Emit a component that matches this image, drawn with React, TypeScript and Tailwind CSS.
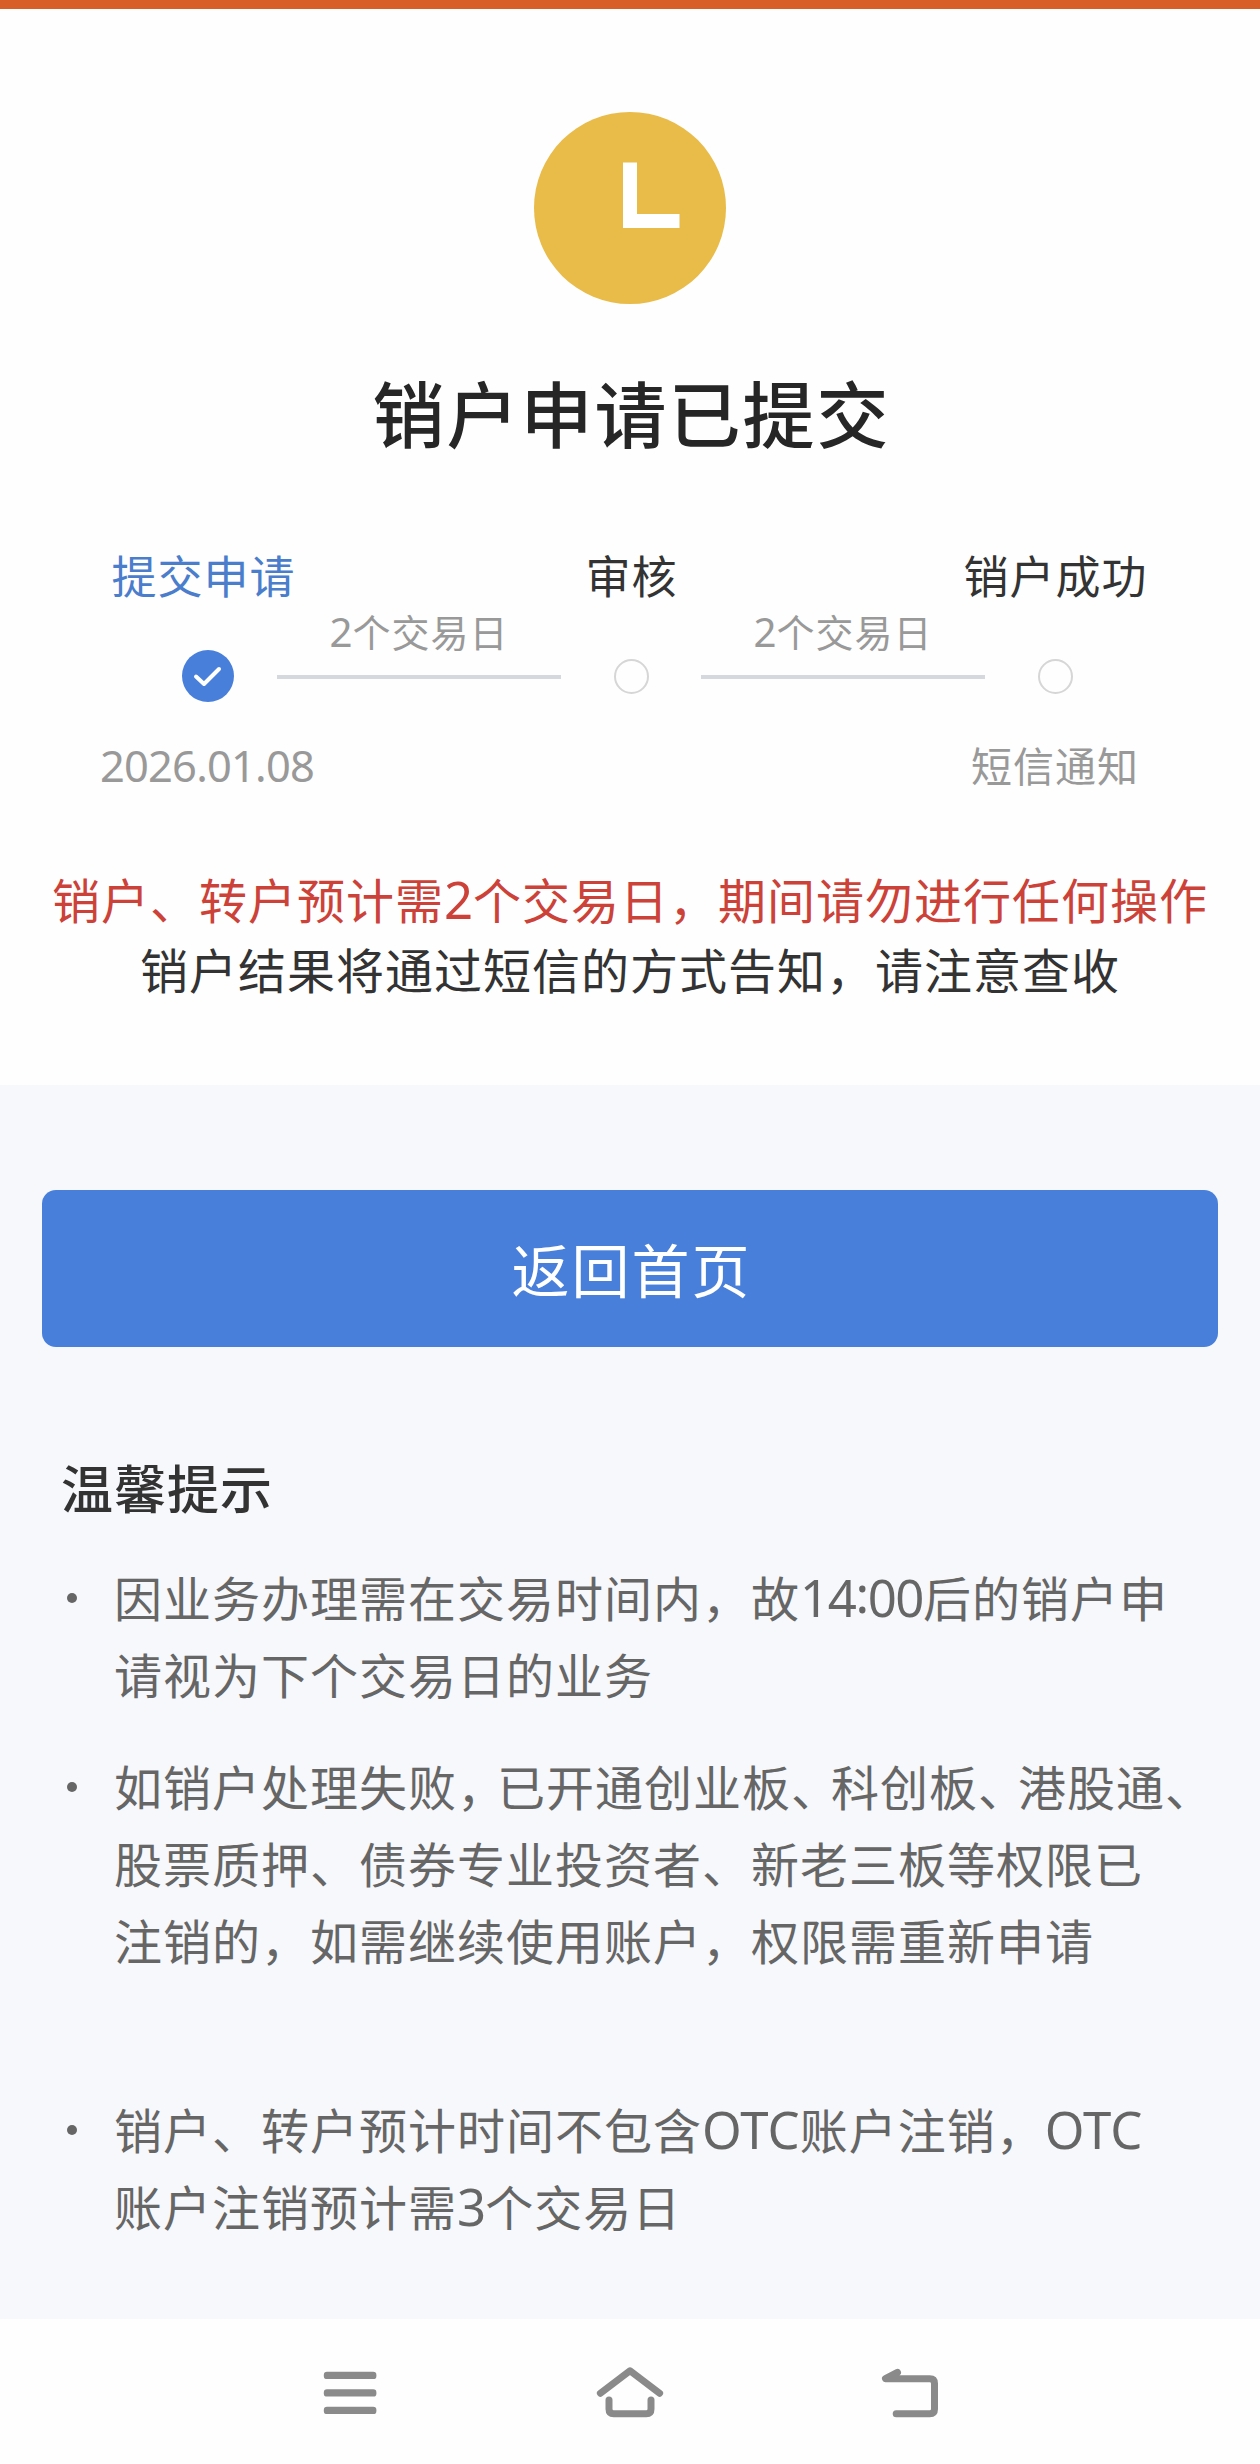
import React from 'react';

interface StepProps {
  label: string;
  note?: React.ReactNode;
  done?: boolean;
}

// Latin letters and digits sit inside the Chinese copy at a slightly larger size
const Latin: React.FC<{ children: React.ReactNode; className?: string }> = ({ children, className = 'tracking-normal' }) => (
  <span className={`font-['Noto_Sans',sans-serif] text-[1.06em] leading-none ${className}`}>{children}</span>
);

// Punctuation squeezed so the line still fits
const Tight: React.FC<{ children: React.ReactNode }> = ({ children }) => (
  <span className="tracking-[-8px]">{children}</span>
);

const Step: React.FC<StepProps> = ({ label, note, done = false }) => (
  <div className="flex w-[140px] flex-col items-center whitespace-nowrap">
    <div className={`h-[51px] text-[45px] leading-[51px] tracking-[1px] ${done ? '-ml-[7px] text-[#4a7dcb]' : 'ml-px text-[#333333]'}`}>
      {label}
    </div>
    <div className="mt-6 flex h-[104px] items-center justify-center">
      {done ? (
        <div className="ml-0.5 flex size-[52px] items-center justify-center rounded-full bg-[#487fdb]">
          <svg viewBox="0 0 52 52" fill="none" stroke="white" strokeWidth={4} className="size-full">
            <path strokeLinecap="round" strokeLinejoin="round" d="M14 26.5 22 34 37 19" />
          </svg>
        </div>
      ) : (
        <div className="size-[35px] rounded-full border-2 border-[#d6d6d6]" />
      )}
    </div>
    <div className="mt-[11px] h-[50px] text-[41px] leading-[50px] tracking-[1px] text-[#999999]">{note}</div>
  </div>
);

const Connector: React.FC = () => (
  <div className="flex w-[284px] flex-col items-center pt-[62px]">
    <div className="h-10 whitespace-nowrap text-[38px] leading-10 tracking-[1px] text-[#999999]">
      <Latin>2</Latin>个交易日
    </div>
    <div className="mt-6 h-1 w-full bg-[#d5d8dc]" />
  </div>
);

const Tip: React.FC<{ children: React.ReactNode; className?: string }> = ({ children, className = '' }) => (
  <li className={`flex ${className}`}>
    <span className="mt-[35px] size-2.5 shrink-0 rounded-full bg-[#666666]" />
    <p className="ml-[37px] whitespace-nowrap">{children}</p>
  </li>
);

const App: React.FC = () => {
  return (
    <div className="flex h-[2464px] w-[1260px] flex-col overflow-hidden bg-white font-['Noto_Sans_CJK_SC',sans-serif]" lang="zh-CN">
      <section className="h-[1085px] border-t-[9px] border-[#d85f27] bg-[#fefefe]">
        <div className="flex flex-col items-center pt-[103px]">
          <svg viewBox="0 0 192 192" className="size-48">
            <circle cx="96" cy="96" r="96" fill="#e9bb48" />
            <path d="M89 50.5h14v51.5h42.5v14H89z" fill="#ffffff" />
          </svg>
          <h1 className="mt-[57px] h-[100px] pl-[3px] text-[72px] font-medium leading-[100px] tracking-[2px] text-[#262626]">销户申请已提交</h1>
        </div>

        <div className="mt-[88px] flex pl-[137px]">
          <Step label="提交申请" note={<Latin className="tracking-[-0.8px]">2026.01.08</Latin>} done />
          <Connector />
          <Step label="审核" />
          <Connector />
          <Step label="销户成功" note="短信通知" />
        </div>

        <div className="mt-[74px] whitespace-nowrap text-center text-[48px] leading-[70px] tracking-[1px]">
          <p className="text-[#cc4239]">
            销户、转户预计需<Latin>2</Latin>个交易日，期间请勿进行任何操作
          </p>
          <p className="text-[#333333]">销户结果将通过短信的方式告知，请注意查收</p>
        </div>
      </section>

      <section className="h-[1234px] bg-[#f6f8fb] pt-[105px]">
        <button className="mx-[42px] flex h-[157px] w-[1176px] items-center justify-center rounded-[14px] bg-[#487fdb] pl-[3px] text-[58px] tracking-[2px] text-white">
          返回首页
        </button>

        <div className="pl-[61px]">
          <h2 className="mt-[100px] h-20 text-[52px] font-medium leading-20 tracking-[1px] text-[#333333]">温馨提示</h2>
          <ul className="mt-[31px] pl-1.5 text-[48px] leading-[77px] tracking-[1px] text-[#666666]">
            <Tip>
              因业务办理需在交易时间内，故
              <Latin className="tracking-[-1.4px]">
                14<span className="relative -top-1">:</span>00
              </Latin>
              后的销户申
              <br />
              请视为下个交易日的业务
            </Tip>
            <Tip className="mt-[35px]">
              如销户处理失败<Tight>，</Tight>已开通创业板<Tight>、</Tight>科创板<Tight>、</Tight>港股通<Tight>、</Tight>
              <br />
              股票质押、债券专业投资者、新老三板等权限已
              <br />
              注销的，如需继续使用账户，权限需重新申请
            </Tip>
            <Tip className="mt-28">
              销户、转户预计时间不包含<Latin>OTC</Latin>账户注销，<Latin>OTC</Latin>
              <br />
              账户注销预计需<Latin className="tracking-[-1px]">3</Latin>个交易日
            </Tip>
          </ul>
        </div>
      </section>

      <nav className="flex h-[145px] justify-center gap-[200px] bg-[#fefefe] pt-[33px] text-[#8a8a8a]">
        <svg viewBox="0 0 80 80" fill="currentColor" className="size-20">
          <rect x="13.8" y="19.8" width="52.6" height="7.3" rx="3.2" />
          <rect x="13.8" y="37.3" width="52.6" height="7.3" rx="3.2" />
          <rect x="13.8" y="54.8" width="52.6" height="7.3" rx="3.2" />
        </svg>
        <svg viewBox="0 0 80 80" fill="none" stroke="currentColor" strokeWidth={7} strokeLinecap="round" strokeLinejoin="round" className="size-20">
          <path d="M10.4 41.2 40 18.8 69.6 41.2" />
          <path d="M19 48v9q0 4.7 4.7 4.7h32.6q4.7 0 4.7-4.7v-9" />
        </svg>
        <svg viewBox="0 0 80 80" fill="none" stroke="currentColor" strokeWidth={7} strokeLinecap="round" strokeLinejoin="round" className="size-20">
          <path d="M27.5 20.3 15.5 26.7h44.3q4.7 0 4.7 4.7v25.6q0 4.7-4.7 4.7H26.2" />
        </svg>
      </nav>
    </div>
  );
};

export default App;
